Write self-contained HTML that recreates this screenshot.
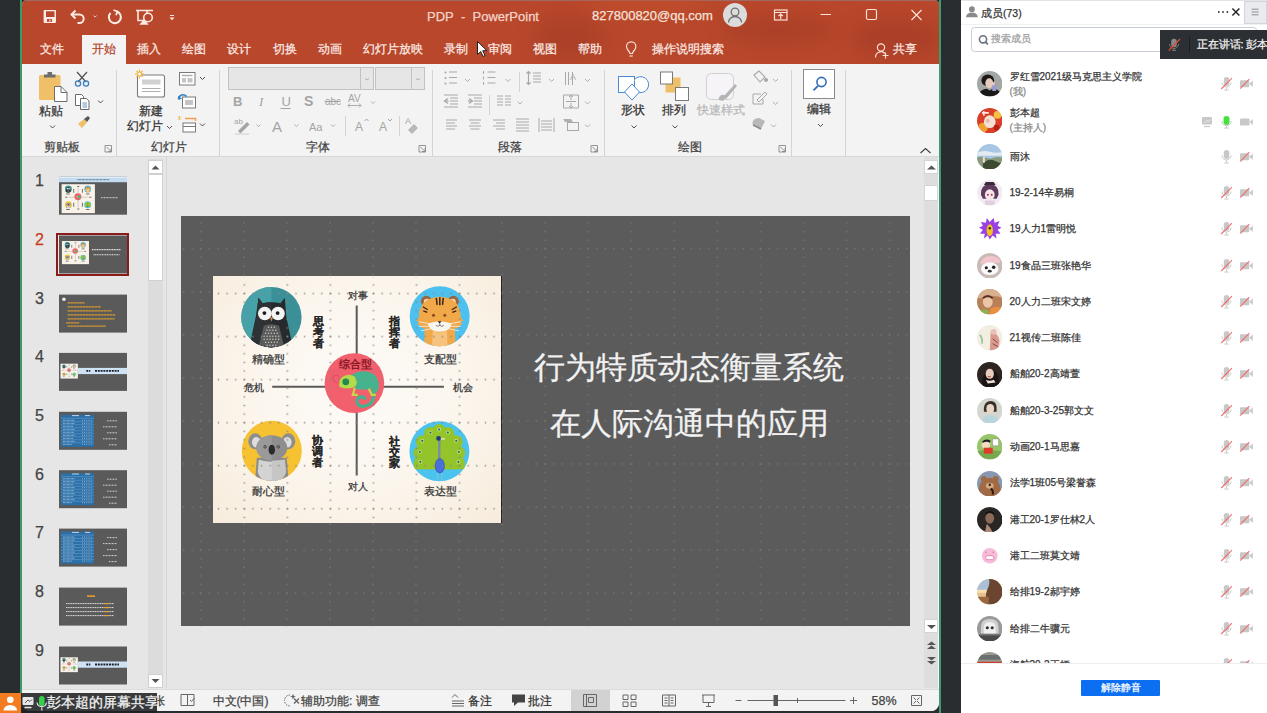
<!DOCTYPE html>
<html><head><meta charset="utf-8">
<style>
*{box-sizing:border-box}
html,body{margin:0;padding:0}
body{width:1267px;height:713px;overflow:hidden;position:relative;background:#2a2d30;font-family:"Liberation Sans",sans-serif;color:#333}
.a{position:absolute}
.t{position:absolute;white-space:nowrap;line-height:1;-webkit-text-stroke:.25px currentColor}
</style></head><body>
<!-- left green line -->
<div class="a" style="left:20px;top:0;width:2px;height:713px;background:#3a9a6a"></div>
<div class="a" style="left:939px;top:0;width:2px;height:713px;background:#3f9a70"></div>
<!-- PPT window -->
<div class="a" id="win" style="left:22px;top:0px;width:917px;height:711px;background:#e6e6e6;border-radius:5px 5px 8px 8px;overflow:hidden">
  <!-- title bar + tabs -->
  <div class="a" style="left:0;top:0;width:917px;height:64px;background:#b8472b"></div>
  <div class="a" style="left:0;top:0;width:917px;height:1.3px;background:#a06a62"></div>
  <!-- decorative patches -->
  <div class="a" style="left:512px;top:16px;width:70px;height:44px;background:#a33c26;border-radius:50%;filter:blur(9px);opacity:.55"></div>
  <div class="a" style="left:700px;top:16px;width:110px;height:28px;background:#a33c26;border-radius:50%;filter:blur(8px);opacity:.55"></div>
  <div class="a" style="left:830px;top:20px;width:90px;height:36px;background:#a23b26;border-radius:50%;filter:blur(9px);opacity:.6"></div>
  <div class="a" style="left:560px;top:-6px;width:130px;height:22px;background:#c4522f;border-radius:50%;filter:blur(8px);opacity:.5"></div>
  <!-- QAT icons -->
  <svg class="a" style="left:0;top:0" width="60" height="30">
    <rect x="21.6" y="10.1" width="12.4" height="12.8" rx=".8" fill="#fbe9e3"/>
    <rect x="24" y="11.3" width="8.5" height="5.7" fill="#b8472b"/>
    <rect x="25" y="19.1" width="5" height="2.8" fill="#b8472b"/>
    <rect x="27.3" y="19.6" width="1.2" height="2" fill="#fbe9e3"/>
  </svg>
  <svg class="a" style="left:0;top:0" width="917" height="64">
    <g fill="none" stroke="#fbe9e3" stroke-width="1.6">
      <!-- save -->

      <!-- undo -->
      <path d="M50 14.5h7.5a4.2 4.2 0 0 1 0 8.4h-2" stroke-width="2"/>
      <path d="M53.5 10.5l-4 4 4 4" stroke-width="2"/>
      <!-- redo circle -->
      <path d="M95 11.5a6 6 0 1 1 -6.5 1.5" stroke-width="2"/>
      <path d="M91.5 10l3.8 1.5 -1.2 3.8" stroke-width="1.8"/>
      <!-- presentation -->
      <path d="M114 10.5h17M116 10.5v10h6M125 10.5v3"/>
      <circle cx="126" cy="17.5" r="4.3"/>
      <path d="M119 24l3-3.5 3 3.5z" fill="#fbe9e3"/>
    </g>
    <path d="M71.5 15.5l1.6 1.6 1.6-1.6" fill="none" stroke="#f2c9bd" stroke-width="1"/>
    <path d="M148 15.5h4" stroke="#fbe9e3" stroke-width="1"/>
    <path d="M147.5 17.5h5l-2.5 2.8z" fill="#fbe9e3"/>
    <!-- avatar -->
    <circle cx="713" cy="15" r="12" fill="#dcdcdc"/>
    <circle cx="713" cy="12" r="3.8" fill="none" stroke="#707070" stroke-width="1.3"/>
    <path d="M706.5 22.5a6.5 6 0 0 1 13 0" fill="none" stroke="#707070" stroke-width="1.3"/>
    <!-- window controls -->
    <g fill="none" stroke="#fbe1d8" stroke-width="1.2">
      <rect x="752.5" y="10" width="12.5" height="10"/>
      <path d="M752.5 12.5h12.5"/>
      <path d="M758.7 19v-5M756.5 16l2.2-2 2.2 2"/>
      <path d="M798.5 14.5h10.5"/>
      <rect x="844.5" y="9.5" width="10" height="10" rx="1.5"/>
      <path d="M889.5 10l10 10M899.5 10l-10 10"/>
      <!-- share person -->
      <circle cx="859" cy="47.5" r="3.6"/>
      <path d="M853.5 57.5a5.5 5.5 0 0 1 9.5-4"/>
      <path d="M863.5 52.5v6M860.5 55.5h6"/>
      <!-- lightbulb -->
      <path d="M608 53.5c0-2 -3.5-3.5-3.5-7a4.7 4.7 0 0 1 9.4 0c0 3.5-3.5 5-3.5 7z"/>
      <path d="M607.5 56h3.2"/>
    </g>
  </svg>
  <div class="t" style="left:405px;top:10px;font-size:13px;color:#f3d5cb">PDP&nbsp; -&nbsp; PowerPoint</div>
  <div class="t" style="left:570px;top:9px;font-size:13px;color:#f6e1da">827800820@qq.com</div>
  <!-- tabs -->
  <div class="a" style="left:60.4px;top:35px;width:43.6px;height:30px;background:#f3f3f3"></div>
  <div class="t" style="left:17.5px;top:42.5px;font-size:12px;color:#fbe9e3">文件</div>
  <div class="t" style="left:70px;top:42.5px;font-size:12px;color:#b8472b">开始</div>
  <div class="t" style="left:114.5px;top:42.5px;font-size:12px;color:#fbe9e3">插入</div>
  <div class="t" style="left:160px;top:42.5px;font-size:12px;color:#fbe9e3">绘图</div>
  <div class="t" style="left:205px;top:42.5px;font-size:12px;color:#fbe9e3">设计</div>
  <div class="t" style="left:250.5px;top:42.5px;font-size:12px;color:#fbe9e3">切换</div>
  <div class="t" style="left:295.5px;top:42.5px;font-size:12px;color:#fbe9e3">动画</div>
  <div class="t" style="left:341px;top:42.5px;font-size:12px;color:#fbe9e3">幻灯片放映</div>
  <div class="t" style="left:421.5px;top:42.5px;font-size:12px;color:#fbe9e3">录制</div>
  <div class="t" style="left:466px;top:42.5px;font-size:12px;color:#fbe9e3">审阅</div>
  <div class="t" style="left:511px;top:42.5px;font-size:12px;color:#fbe9e3">视图</div>
  <div class="t" style="left:556px;top:42.5px;font-size:12px;color:#fbe9e3">帮助</div>
  <div class="t" style="left:630px;top:42.5px;font-size:12px;color:#fbe9e3">操作说明搜索</div>
  <div class="t" style="left:870.5px;top:42.5px;font-size:12px;color:#fbe9e3">共享</div>
  <!-- cursor -->
  <svg class="a" style="left:454px;top:40px" width="14" height="18"><path d="M1.5 1.5v13l3.2-3 2.3 5 2-1-2.3-4.8h4.3z" fill="#fff" stroke="#222" stroke-width="1"/></svg>

  <!-- ribbon -->
  <div class="a" style="left:0;top:64px;width:917px;height:93px;background:#f3f3f3;border-bottom:1px solid #d8d8d8"></div>
  <!-- ribbon content -->
  <svg class="a" style="left:0;top:0" width="917" height="160">
    <!-- separators -->
    <g stroke="#d4d4d4" stroke-width="1">
      <path d="M94.5 70v86M197.5 70v86M410.5 70v86M582.5 70v86M769.5 70v86M823.5 70v86"/>
      <path d="M323.5 116v20M377.5 116v20M497.5 72v20M467.5 95v20"/>
    </g>
    <!-- clipboard -->
    <rect x="17" y="75" width="21.5" height="25" rx="1.5" fill="#f0c069"/>
    <path d="M22 77.5v-3h3.5v-2.5h4.5v2.5h3.5v3z" fill="#6d6d6d"/>
    <path d="M32.5 86.5h6.5l6 6v9h-12.5z" fill="#fff" stroke="#6d6d6d" stroke-width="1"/>
    <path d="M39 86.5v6h6" fill="none" stroke="#6d6d6d" stroke-width="1"/>
    <!-- scissors -->
    <g fill="none" stroke="#505050" stroke-width="1.2"><path d="M55 72l9 10M65 72l-9 10"/></g>
    <circle cx="56" cy="83.5" r="2.6" fill="none" stroke="#3c7fc0" stroke-width="1.3"/>
    <circle cx="64" cy="83.5" r="2.6" fill="none" stroke="#3c7fc0" stroke-width="1.3"/>
    <!-- copy -->
    <path d="M53.5 94.5h6l2 2v9h-8z" fill="#fff" stroke="#6a6a6a" stroke-width="1"/>
    <path d="M58.5 98.5h6l2.5 2.5v8.5h-8.5z" fill="#fff" stroke="#6a6a6a" stroke-width="1"/>
    <path d="M60.5 103h4.5M60.5 105h4.5M60.5 107h4.5" stroke="#3c7fc0" stroke-width=".8"/>
    <!-- format painter -->
    <path d="M56 124l6-5 3 3.5-5 5.5z" fill="#f0c069"/>
    <path d="M62 119l4-3 2 2-3 4z" fill="#555"/>
    <!-- new slide -->
    <rect x="115.5" y="75" width="27" height="22" rx="2" fill="#fff" stroke="#7a7a7a" stroke-width="1.1"/>
    <rect x="120" y="79.5" width="18.5" height="5" fill="#d0d0d0"/>
    <path d="M120 88.5h18.5M120 91.5h18.5" stroke="#9a9a9a" stroke-width=".8"/>
    <g stroke="#f0b040" stroke-width="1.1"><path d="M117.5 69.5v9M113 74h9M114.5 71l6 6M120.5 71l-6 6"/></g>
    <circle cx="117.5" cy="74" r="2" fill="#fff" stroke="#f0b040" stroke-width="1"/>
    <!-- layout -->
    <rect x="157.5" y="72.5" width="15.5" height="12.5" fill="#fff" stroke="#7a7a7a" stroke-width="1"/>
    <path d="M160 75.5h10.5" stroke="#b0b0b0" stroke-width="1.5"/>
    <rect x="160" y="78" width="4" height="4.5" fill="#c4c4c4"/><rect x="165.5" y="78" width="5" height="4.5" fill="#c4c4c4"/>
    <!-- reset -->
    <rect x="160.5" y="97" width="13" height="11" fill="#fff" stroke="#7a7a7a" stroke-width="1"/>
    <rect x="163" y="100" width="8" height="5" fill="#c4c4c4"/>
    <path d="M156.5 99a4.5 4.5 0 0 1 8-2.5" fill="none" stroke="#2f7ec2" stroke-width="1.6"/>
    <path d="M156 96l.5 4 3.5-1.5z" fill="#2f7ec2"/>
    <!-- section -->
    <rect x="161" y="123" width="12.5" height="9" fill="#fff" stroke="#7a7a7a" stroke-width="1"/>
    <path d="M161 126.5h12.5" stroke="#7a7a7a"/>
    <path d="M163 118.5h10.5v2.5" fill="none" stroke="#f0a050" stroke-width="1.5"/>
    <path d="M156 116.5l3 3M159 116.5l-3 3M157.5 116v4" stroke="#f0c069" stroke-width="1"/>
    <!-- chevrons -->
    <g fill="none" stroke="#505050" stroke-width="1">
      <path d="M28 125.5l2.5 2.5 2.5-2.5"/>
      <path d="M76 100.5l2.5 2.5 2.5-2.5"/>
      <path d="M145 126l2.5 2.5 2.5-2.5"/>
      <path d="M178 77l2.5 2.5 2.5-2.5"/>
      <path d="M178 123.5l2.5 2.5 2.5-2.5"/>
      <path d="M609.5 125.5l2.5 2.5 2.5-2.5"/>
      <path d="M650.5 125.5l2.5 2.5 2.5-2.5"/>
      <path d="M796 124l2.5 2.5 2.5-2.5"/>
      <path d="M898.5 153l5-4.5 5 4.5" stroke="#444" stroke-width="1.2"/>
    </g>
    <!-- launchers -->
    <g fill="none" stroke="#8a8a8a" stroke-width=".9">
      <path d="M83 145.5h6.5v6.5h-6.5z M84.5 147l4 4M89 148.5v3h-3"/>
      <path d="M397 145.5h6.5v6.5h-6.5z M398.5 147l4 4M403 148.5v3h-3"/>
      <path d="M569 145.5h6.5v6.5h-6.5z M570.5 147l4 4M575 148.5v3h-3"/>
      <path d="M757 145.5h6.5v6.5h-6.5z M758.5 147l4 4M763 148.5v3h-3"/>
    </g>
    <!-- font boxes -->
    <rect x="206.5" y="67.5" width="145" height="22" fill="#e6e6e6" stroke="#c2c2c2"/>
    <path d="M338.5 67.5v22" stroke="#c2c2c2"/>
    <rect x="353.5" y="67.5" width="49" height="22" fill="#e6e6e6" stroke="#c2c2c2"/>
    <path d="M389.5 67.5v22" stroke="#c2c2c2"/>
    <g fill="none" stroke="#a8a8a8" stroke-width=".9">
      <path d="M343 78.5l2 1.5 2-1.5M394 78.5l2 1.5 2-1.5"/>
      <path d="M349 101.5l2 2 2-2M234.5 124.5l2 2 2-2M272.5 124.5l2 2 2-2M309 124.5l2 2 2-2"/>
      <path d="M443 79l2.5 2.5 2.5-2.5M483.5 79l2.5 2.5 2.5-2.5M527 79l2.5 2.5 2.5-2.5M563 79l2.5 2.5 2.5-2.5"/>
      <path d="M495.5 101.5l2.5 2.5 2.5-2.5M563 101.5l2.5 2.5 2.5-2.5M563 124.5l2.5 2.5 2.5-2.5"/>
      <path d="M751 79l2.5 2.5 2.5-2.5M751 102l2.5 2.5 2.5-2.5M749 124.5l2.5 2.5 2.5-2.5"/>
    </g>
    <!-- B I U S abc AV -->
    <g fill="#a4a4a4" font-family="Liberation Sans" font-weight="bold">
      <text x="211" y="106" font-size="13">B</text>
      <text x="237" y="106" font-size="13" font-style="italic" font-weight="normal" font-family="Liberation Serif">I</text>
      <text x="259.5" y="106" font-size="13" font-weight="normal">U</text>
      <text x="282" y="106" font-size="14">S</text>
      <text x="303" y="105" font-size="10" font-weight="normal">abc</text>
      <text x="326" y="102" font-size="10" font-weight="normal">AV</text>
      <text x="250" y="132" font-size="15" font-weight="normal">A</text>
      <text x="287" y="131" font-size="11" font-weight="normal">Aa</text>
      <text x="333" y="131" font-size="12" font-weight="normal">A</text>
      <text x="357" y="131" font-size="12" font-weight="normal">A</text>
    </g>
    <path d="M258.5 108.5h10" stroke="#a4a4a4" stroke-width="1"/>
    <path d="M302.5 101.5h16" stroke="#a4a4a4" stroke-width="1"/>
    <path d="M326 105.5h13M328 103.5l-2 2 2 2M337 103.5l2 2-2 2" stroke="#a4a4a4" stroke-width=".9" fill="none"/>
    <path d="M342.5 121l2-2 2 2M366 119l2 2 2-2" stroke="#a4a4a4" stroke-width="1" fill="none"/>
    <!-- pen highlighter -->
    <text x="212" y="124" font-size="8" fill="#a4a4a4" font-family="Liberation Sans">ab</text>
    <path d="M216 131l9-9 2.5 2.5-9 9z" fill="#a4a4a4"/>
    <path d="M213 134h14" stroke="#e0e0e0" stroke-width="2"/>
    <!-- eraser -->
    <text x="383" y="124" font-size="9" fill="#a4a4a4" font-family="Liberation Sans">A</text>
    <path d="M386 130l6-6 4 4-6 6z" fill="#b8b8b8"/>
    <!-- paragraph icons -->
    <g fill="#a8a8a8">
      <circle cx="423.5" cy="72.5" r="1"/><circle cx="423.5" cy="78" r="1"/><circle cx="423.5" cy="83.5" r="1"/>
      <path d="M427 72h8M427 77.5h8M427 83h8" stroke="#a8a8a8" stroke-width="1.2"/>
      <path d="M465.5 72h8M465.5 77.5h8M465.5 83h8" stroke="#a8a8a8" stroke-width="1.2"/>
      <path d="M461.5 71v3M461.5 76.5v3M461.5 82v3" stroke="#a8a8a8" stroke-width="1"/>
      <path d="M511 73h8M511 76h8M511 79h8M511 82h8" stroke="#a8a8a8" stroke-width="1"/>
      <path d="M506.5 71.5v13M504.5 73.5l2-2 2 2M504.5 82.5l2 2 2-2" stroke="#a8a8a8" stroke-width="1.2" fill="none"/>
      <path d="M543.5 72v13M546.5 72v13M550.5 72v13" stroke="#a8a8a8" stroke-width="1"/>
      <text x="548" y="80" font-size="9" font-family="Liberation Sans">A</text>
      <!-- row 2 -->
      <path d="M422 95h14M428 98h8M428 101h8M428 104h8M422 107h14" stroke="#a8a8a8" stroke-width="1"/>
      <path d="M426 98.5l-3.5 2.5 3.5 2.5" stroke="#a8a8a8" stroke-width="1.3" fill="none"/><path d="M422.5 101h4" stroke="#a8a8a8" stroke-width="1.3"/>
      <path d="M446 95h14M452 98h8M452 101h8M452 104h8M446 107h14" stroke="#a8a8a8" stroke-width="1"/>
      <path d="M447 98.5l3.5 2.5-3.5 2.5" stroke="#a8a8a8" stroke-width="1.3" fill="none"/><path d="M446 101h4" stroke="#a8a8a8" stroke-width="1.3"/>
      <path d="M475 96h6M483 96h6M475 99h6M483 99h6M475 102h6M483 102h6M475 105h6M483 105h6" stroke="#a8a8a8" stroke-width="1"/>
      <path d="M541.5 95h15v13h-15z" fill="none" stroke="#a8a8a8" stroke-width="1"/>
      <path d="M549 95v5M547 97l2-2 2 2M549 108v-5M547 106l2 2 2-2M544 101.5h10" stroke="#a8a8a8" stroke-width="1" fill="none"/>
      <!-- row 3 align -->
      <path d="M424 120h11M424 123h9M424 126h11M424 129h9" stroke="#a8a8a8" stroke-width="1"/>
      <path d="M447 120h12M448.5 123h9M447 126h12M448.5 129h9" stroke="#a8a8a8" stroke-width="1"/>
      <path d="M471 120h12M474 123h9M471 126h12M474 129h9" stroke="#a8a8a8" stroke-width="1"/>
      <path d="M494 119h13M494 122h13M494 125h13M494 128h13M494 131h13" stroke="#a8a8a8" stroke-width="1"/>
      <path d="M517 118v14M532 118v14M519 121h11M519 124h11M519 127h11M519 130h11" stroke="#a8a8a8" stroke-width="1"/>
      <path d="M541 119h8l2 3h-8zM541 125h5" fill="#b0b0b0"/>
      <rect x="545.5" y="122.5" width="11" height="8" fill="#f3f3f3" stroke="#a8a8a8" stroke-width="1"/>
    </g>
    <!-- shapes -->
    <rect x="596.5" y="76.5" width="16" height="16" fill="#fff" stroke="#4a8ad0" stroke-width="1"/>
    <path d="M612.5 79.5a8 8 0 1 1 2 12" fill="#fff" stroke="#4a8ad0" stroke-width="1"/>
    <path d="M610 84l7.5 8-7.5 8-7.5-8z" fill="#fff" stroke="#4a8ad0" stroke-width="1"/>
    <!-- arrange -->
    <rect x="643.5" y="77.5" width="15" height="15" fill="#f0c069"/>
    <rect x="638.5" y="72" width="12" height="12" fill="#fff" stroke="#7a7a7a" stroke-width="1"/>
    <rect x="653.5" y="87.5" width="13" height="13" fill="#fff" stroke="#7a7a7a" stroke-width="1"/>
    <!-- quick styles -->
    <rect x="684.5" y="73.5" width="27" height="26" rx="5" fill="#f6f4f8" stroke="#d0d0d0" stroke-width="1"/>
    <path d="M701 97l12-13 2 2-11 13z" fill="#b4b4b4"/>
    <path d="M697 100a4 4 0 0 1 5-5l2 2-3 4z" fill="#b4b4b4"/>
    <!-- fill/outline/effects -->
    <path d="M732 75l5-4 6 6-5 5z" fill="none" stroke="#a8a8a8" stroke-width="1.1"/>
    <path d="M744 78a2 2 0 1 0 0.1 0" fill="#a8a8a8"/>
    <path d="M731 94h8M731 94v10h10v-5" fill="none" stroke="#a8a8a8" stroke-width="1"/>
    <path d="M735 100l8-8 2 2-8 8z" fill="none" stroke="#a8a8a8" stroke-width="1"/>
    <path d="M731 125a6 5 0 0 1 6-7l6 3-4 8z" fill="#b8b8b8"/>
    <path d="M731 125l8 4" stroke="#8a8a8a" stroke-width="1.5"/>
    <!-- edit -->
    <rect x="781.5" y="69.5" width="31" height="29" fill="#fff" stroke="#8a8a8a" stroke-width="1"/>
    <circle cx="799.5" cy="82" r="4.6" fill="none" stroke="#2f6fba" stroke-width="1.6"/>
    <path d="M796 85.8l-4.5 4.5" stroke="#2f6fba" stroke-width="1.8"/>
  </svg>
  <div class="t" style="left:16.5px;top:105px;font-size:12px;color:#333">粘贴</div>
  <div class="t" style="left:116.5px;top:105px;font-size:12px;color:#333">新建</div>
  <div class="t" style="left:105px;top:120px;font-size:12px;color:#333">幻灯片</div>
  <div class="t" style="left:598.5px;top:104px;font-size:12px;color:#333">形状</div>
  <div class="t" style="left:639.5px;top:104px;font-size:12px;color:#333">排列</div>
  <div class="t" style="left:674.5px;top:104px;font-size:12px;color:#b8b8b8">快速样式</div>
  <div class="t" style="left:785px;top:103px;font-size:12px;color:#333">编辑</div>
  <div class="t" style="left:22px;top:141px;font-size:12px;color:#444">剪贴板</div>
  <div class="t" style="left:128.5px;top:141px;font-size:12px;color:#444">幻灯片</div>
  <div class="t" style="left:284px;top:141px;font-size:12px;color:#444">字体</div>
  <div class="t" style="left:476px;top:141px;font-size:12px;color:#444">段落</div>
  <div class="t" style="left:655.5px;top:141px;font-size:12px;color:#444">绘图</div>


  <!-- slide panel -->
  <div class="a" style="left:0;top:157px;width:144px;height:531px;background:#e6e6e6"></div>
  <div class="a" style="left:144px;top:157px;width:1px;height:531px;background:#d6d6d6"></div>
  <!-- panel scrollbar -->
  <div class="a" style="left:125.5px;top:159px;width:15px;height:529px;background:#dcdcdc"></div>
  <div class="a" style="left:125.5px;top:159.5px;width:15px;height:14.5px;background:#fff;border:1px solid #d0d0d0"></div>
  <div class="a" style="left:125.5px;top:174px;width:15px;height:107px;background:#fff;border:1px solid #d0d0d0"></div>
  <div class="a" style="left:125.5px;top:673.5px;width:15px;height:14.5px;background:#fff;border:1px solid #d0d0d0"></div>
  <svg class="a" style="left:125.5px;top:159.5px" width="15" height="529">
    <path d="M3.5 9.5l4-4 4 4z" fill="#555"/>
    <path d="M3.5 519l4 4 4-4z" fill="#555"/>
  </svg>
  <!-- numbers -->
  <div class="t" style="left:13px;top:173px;font-size:16px;color:#444">1</div>
  <div class="t" style="left:13px;top:232px;font-size:16px;color:#c43e1c">2</div>
  <div class="t" style="left:13px;top:290.5px;font-size:16px;color:#444">3</div>
  <div class="t" style="left:13px;top:349px;font-size:16px;color:#444">4</div>
  <div class="t" style="left:13px;top:408px;font-size:16px;color:#444">5</div>
  <div class="t" style="left:13px;top:466.5px;font-size:16px;color:#444">6</div>
  <div class="t" style="left:13px;top:525px;font-size:16px;color:#444">7</div>
  <div class="t" style="left:13px;top:584px;font-size:16px;color:#444">8</div>
  <div class="t" style="left:13px;top:642.5px;font-size:16px;color:#444">9</div>
  <!-- selected border -->
  <div class="a" style="left:34.3px;top:233px;width:73px;height:43px;border:2px solid #8a1c1c"></div>
  <div class="a" style="left:36.3px;top:235px;width:69px;height:39px;border:1px solid #f5e6e6"></div>
  <!-- thumbnails -->
  <svg class="a" style="left:37px;top:0" width="68" height="700">
    <defs>
      <g id="mcard">
        <rect x="212.8" y="275.6" width="289.7" height="247.7" fill="#f8f2e8"/>
        <use href="#cardart"/>
        <path d="M252 359h32M424 359h32M252 491h32M424 491h32M348 295h19M348 487h19M243 387h20M452 387h20M318 316v32M394 316v32M318 434v34M394 435v33" stroke="#777" stroke-width="9"/>
      </g>
      <g id="tbl">
        <rect x="2" y="3" width="33" height="32" fill="#2b6fa8"/>
        <path d="M2 6.5h33M2 10h33M2 13h33M2 16h33M2 19h33M2 22h33M2 25h33M2 28h33M2 31h33" stroke="#8ab8dc" stroke-width=".4"/>
        <path d="M13 3.8h7" stroke="#e8f0f8" stroke-width=".8"/><path d="M26 3.8h5" stroke="#e8f0f8" stroke-width=".8"/>
        <path d="M4 8.5h12M4 11.5h12M4 14.5h10M4 17.5h12M4 20.5h11M4 23.5h12M4 26.5h10M4 29.5h12M4 32.5h9" stroke="#d8e6f2" stroke-width=".7" stroke-dasharray=".8 .5"/>
        <path d="M23 8.5h10M23 11.5h10M23 14.5h10M23 17.5h10M23 20.5h10M23 23.5h10M23 26.5h10M23 29.5h10M23 32.5h10" stroke="#d8e6f2" stroke-width=".7" stroke-dasharray=".8 1.4"/>
        <path d="M48 9h10M44 15h14M48 21h10M44 27h14M50 33h8" stroke="#e0e0e0" stroke-width=".9" stroke-dasharray="1 .5"/>
      </g>
    </defs>
    <!-- 1 -->
    <g transform="translate(0 176.7)">
      <rect width="68" height="38" fill="#5a5a5a"/>
      <rect width="68" height="5.5" fill="#c4dcf2"/>
      <rect y="0" width="68" height="1.2" fill="#e4eef8"/>
      <path d="M18.5 3h32" stroke="#4a5a6a" stroke-width=".9" stroke-dasharray=".9 .5"/>
      <g transform="translate(2.6 7.5) scale(.115 .117) translate(-212.8 -275.6)"><use href="#mcard"/></g>
      <path d="M42 21h17" stroke="#d8d8d8" stroke-width="1" stroke-dasharray="1 .5"/>
    </g>
    <!-- 2 -->
    <g transform="translate(0 235.5)">
      <rect width="68" height="38" fill="#5a5a5a"/>
      <g transform="scale(.0933) translate(-181.2 -216.2)"><use href="#mcard"/>
        <path d="M534 367h311M550 423h279" stroke="#e6e6e6" stroke-width="12" stroke-dasharray="12 6"/></g>
    </g>
    <!-- 3 -->
    <g transform="translate(0 294.6)">
      <rect width="68" height="38" fill="#5a5a5a"/>
      <circle cx="4.9" cy="4.6" r="1.8" fill="#eee"/>
      <path d="M8.7 8.3h17M8.7 12.3h33.3M8.7 16.3h44M8.7 20.3h48M8.7 24.3h47M7.2 28.3h13M8.7 31.5h38" stroke="#f0a828" stroke-width="1.1" stroke-dasharray="1.1 .4"/>
    </g>
    <!-- 4 -->
    <g transform="translate(0 352.9)">
      <rect width="68" height="38" fill="#5a5a5a"/>
      <g transform="translate(1.5 10.8) scale(.06) translate(-212.8 -275.6)"><use href="#mcard"/></g>
      <rect x="18.8" y="15" width="49.2" height="6.2" fill="#cfe2f4"/>
      <path d="M27.3 18h4M36 18h24" stroke="#1a2230" stroke-width="1.8" stroke-dasharray="2 .8"/>
    </g>
    <!-- 5,6,7 -->
    <g transform="translate(0 411.8)"><rect width="68" height="38" fill="#5a5a5a"/><use href="#tbl"/></g>
    <g transform="translate(0 470.2)"><rect width="68" height="38" fill="#5a5a5a"/><use href="#tbl"/></g>
    <g transform="translate(0 528.6)"><rect width="68" height="38" fill="#5a5a5a"/><use href="#tbl"/></g>
    <!-- 8 -->
    <g transform="translate(0 587.6)">
      <rect width="68" height="38" fill="#5a5a5a"/>
      <path d="M28 8.5h8" stroke="#f0a030" stroke-width="1.5"/>
      <path d="M7 16h48M7 20h48M7 24h48M7 28h48" stroke="#e0e0e0" stroke-width="1" stroke-dasharray="1.2 .5"/>
      <path d="M45 16h5M45 20h5M45 24h5M45 28h5" stroke="#f0a030" stroke-width="1"/>
    </g>
    <!-- 9 -->
    <g transform="translate(0 646.5)">
      <rect width="68" height="38" fill="#5a5a5a"/>
      <g transform="translate(1.5 10.8) scale(.06) translate(-212.8 -275.6)"><use href="#mcard"/></g>
      <rect x="18.8" y="15" width="49.2" height="6.2" fill="#cfe2f4"/>
      <path d="M27.3 18h4M36 18h24" stroke="#1a2230" stroke-width="1.8" stroke-dasharray="2 .8"/>
    </g>
  </svg>
  <!-- main area -->
  <div class="a" style="left:145px;top:157px;width:756px;height:531px;background:#e6e6e6"></div>
  <div class="a" style="left:901.5px;top:157px;width:15px;height:531px;background:#dedede"></div>
  <div class="a" style="left:901.5px;top:160px;width:14px;height:14px;background:#fff;border:1px solid #d4d4d4"></div>
  <div class="a" style="left:901.5px;top:185px;width:14px;height:15.5px;background:#fff;border:1px solid #d4d4d4"></div>
  <div class="a" style="left:901.5px;top:618.5px;width:14px;height:14.5px;background:#fff;border:1px solid #d4d4d4"></div>
  <div class="a" style="left:916px;top:157px;width:1px;height:531px;background:#f4f4f4"></div>
  <svg class="a" style="left:901.5px;top:157px" width="15" height="531">
    <path d="M3 12.5l4.5-4 4.5 4z" fill="#555"/>
    <path d="M3 468l4.5 4 4.5-4z" fill="#555"/>
    <path d="M3 488l4.5-3.5 4.5 3.5zM3 492l4.5-3.5 4.5 3.5z" fill="#555"/>
    <path d="M3 500l4.5 3.5 4.5-3.5zM3 504l4.5 3.5 4.5-3.5z" fill="#555"/>
  </svg>

  <!-- slide -->
  <div class="a" style="left:159.2px;top:216.2px;width:728.6px;height:410.2px;background:#5b5b5b"></div>
  <svg class="a" style="left:159.2px;top:216.2px" width="729" height="411" viewBox="181.2 216.2 729 411">
    <defs>
      <pattern id="gv" patternUnits="userSpaceOnUse" x="179.575" y="218.965" width="43.05" height="8.61"><rect x="20.8" y="3.6" width="1.2" height="1.2" fill="#7c7c7c"/></pattern>
      <pattern id="gh" patternUnits="userSpaceOnUse" x="179.575" y="227.575" width="8.61" height="43.05"><rect x="3.6" y="20.8" width="1.2" height="1.2" fill="#7c7c7c"/></pattern>
      <pattern id="gv2" patternUnits="userSpaceOnUse" x="179.575" y="218.965" width="43.05" height="8.61"><rect x="20.8" y="3.6" width="1.4" height="1.4" fill="#8a8580"/></pattern>
      <pattern id="gh2" patternUnits="userSpaceOnUse" x="179.575" y="227.575" width="8.61" height="43.05"><rect x="3.6" y="20.8" width="1.4" height="1.4" fill="#8a8580"/></pattern>
    </defs>
    <rect x="181.2" y="216.2" width="729" height="411" fill="url(#gv)"/>
    <rect x="181.2" y="216.2" width="729" height="411" fill="url(#gh)"/>
  </svg>

  <!-- card -->
  <div class="a" style="left:190.8px;top:275.6px;width:289.7px;height:247.7px;background:radial-gradient(ellipse at 50% 45%,#fdfbf8 0%,#fbf5ec 55%,#f7ecdc 100%);border-right:1px solid #222"></div>
  <svg class="a" style="left:159.2px;top:216.2px" width="729" height="411" viewBox="181.2 216.2 729 411">
    <g id="cardart">
    <!-- axes -->
    <path d="M356.9 305.7v169.9M272.4 387h171.7" stroke="#5a5a5a" stroke-width="2"/>
    <!-- owl -->
    <clipPath id="c1"><circle cx="271.6" cy="317.4" r="30.2"/></clipPath>
    <g clip-path="url(#c1)">
      <rect x="240" y="286" width="64" height="64" fill="#3a9096"/>
      <rect x="240" y="286" width="31.6" height="64" fill="#46a2a8"/>
      <path d="M258.7 297.9l4 5.5q9-2 18 0l4.3-5.5 1.5 19 7 33h-44.5l7-33z" fill="#262a2c"/>
      <path d="M258.7 297.9l4 5.5q4.5-1 8.9-1v47.6h-21.9l7-33z" fill="#2e3234"/>
      <path d="M264 326q7.6-3 15.2 0l6 24h-27.2z" fill="#5a5a5a"/>
      <g fill="#c8c8c8"><circle cx="268.70" cy="327.5" r=".75"/><circle cx="271.60" cy="327.5" r=".75"/><circle cx="274.50" cy="327.5" r=".75"/><circle cx="267.25" cy="330.5" r=".75"/><circle cx="270.15" cy="330.5" r=".75"/><circle cx="273.05" cy="330.5" r=".75"/><circle cx="275.95" cy="330.5" r=".75"/><circle cx="265.80" cy="333.5" r=".75"/><circle cx="268.70" cy="333.5" r=".75"/><circle cx="271.60" cy="333.5" r=".75"/><circle cx="274.50" cy="333.5" r=".75"/><circle cx="277.40" cy="333.5" r=".75"/><circle cx="264.35" cy="336.5" r=".75"/><circle cx="267.25" cy="336.5" r=".75"/><circle cx="270.15" cy="336.5" r=".75"/><circle cx="273.05" cy="336.5" r=".75"/><circle cx="275.95" cy="336.5" r=".75"/><circle cx="278.85" cy="336.5" r=".75"/><circle cx="264.35" cy="339.5" r=".75"/><circle cx="267.25" cy="339.5" r=".75"/><circle cx="270.15" cy="339.5" r=".75"/><circle cx="273.05" cy="339.5" r=".75"/><circle cx="275.95" cy="339.5" r=".75"/><circle cx="278.85" cy="339.5" r=".75"/><circle cx="265.80" cy="342.5" r=".75"/><circle cx="268.70" cy="342.5" r=".75"/><circle cx="271.60" cy="342.5" r=".75"/><circle cx="274.50" cy="342.5" r=".75"/><circle cx="277.40" cy="342.5" r=".75"/><circle cx="267.25" cy="345.5" r=".75"/><circle cx="270.15" cy="345.5" r=".75"/><circle cx="273.05" cy="345.5" r=".75"/><circle cx="275.95" cy="345.5" r=".75"/></g>
      <circle cx="265" cy="313.7" r="6.8" fill="#f4f4f4"/><circle cx="278.2" cy="313.7" r="6.8" fill="#f4f4f4"/>
      <circle cx="264.6" cy="313.3" r="1.9" fill="#1a1a1a"/><circle cx="277.8" cy="313.3" r="1.9" fill="#1a1a1a"/>
      <path d="M270.2 317.5h3l-1.5 4.5z" fill="#d88848"/>
    </g>
    <!-- tiger -->
    <clipPath id="c2"><circle cx="439.9" cy="316.5" r="30"/></clipPath>
    <g clip-path="url(#c2)">
      <rect x="408" y="285" width="64" height="64" fill="#4cc0ee"/>
      <path d="M424 350l1-22h30l1 22z" fill="#f0a848"/>
      <path d="M432 350l1-20h14l1 20z" fill="#f6c27e"/>
      <circle cx="426.5" cy="301.5" r="5.5" fill="#9a6640"/><circle cx="453.5" cy="301.5" r="5.5" fill="#9a6640"/>
      <circle cx="427" cy="302" r="3" fill="#f6d2ac"/><circle cx="453" cy="302" r="3" fill="#f6d2ac"/>
      <path d="M419 318q0-20 21-21q21 1 21 21q2 6-3 10l-18 5-18-5q-5-4-3-10z" fill="#f0a848"/>
      <path d="M419 318l-3 3 4 1-3 3 4 0M461 318l3 3-4 1 3 3-4 0" fill="#f0a848"/>
      <path d="M436.5 298l.8 7M440 297.5v8M443.5 298l-.8 7" stroke="#3a2418" stroke-width="1.5"/>
      <path d="M423 307l5 3M423.5 311l4 1.5M457 307l-5 3M456.5 311l-4 1.5" stroke="#3a2418" stroke-width="1.3"/>
      <circle cx="433.7" cy="315.5" r="1.5" fill="#8a4a20"/><circle cx="445" cy="315.5" r="1.5" fill="#8a4a20"/>
      <path d="M428 324q12-5 24 0q-2 8-12 8q-10 0-12-8z" fill="#f8f6ee"/>
      <path d="M437.8 321.5h4l-2 2.2z" fill="#222"/>
      <path d="M440 323.5v2q-2 2-4 0M440 325.5q2 2 4 0" stroke="#333" stroke-width=".6" fill="none"/>
      <path d="M436 325l-17-3M436 326.5l-17 0M436 328l-15 3M444 325l17-3M444 326.5l17 0M444 328l15 3" stroke="#f4f4f0" stroke-width=".8"/>
    </g>
    <!-- koala -->
    <clipPath id="c3"><circle cx="272" cy="451" r="30"/></clipPath>
    <g clip-path="url(#c3)">
      <rect x="240" y="419" width="64" height="64" fill="#f6c232"/>
      <path d="M255 486l2-28h30l2 28z" fill="#8c8c8c"/>
      <ellipse cx="255.5" cy="441.5" rx="7" ry="8" fill="#8e8e8e"/><ellipse cx="288.5" cy="441.5" rx="7" ry="8" fill="#8e8e8e"/>
      <ellipse cx="256.5" cy="442.5" rx="4.3" ry="5.3" fill="#dedede"/><ellipse cx="287.5" cy="442.5" rx="4.3" ry="5.3" fill="#dedede"/>
      <ellipse cx="272" cy="448" rx="15.5" ry="12.5" fill="#8e8e8e"/>
      <path d="M272 435.5a15.5 12.5 0 0 0 0 25z" fill="#9a9a9a"/>
      <path d="M259 460q13 4 26 0l1 12q-1 8-14 12q-13-4-14-12z" fill="#d4d4d4"/>
      <path d="M272 461v23q13-4 14-12l-1-12z" fill="#c6c6c6"/>
      <circle cx="265.3" cy="447" r="1.3" fill="none" stroke="#333" stroke-width=".8"/><circle cx="278.5" cy="447" r="1.3" fill="none" stroke="#333" stroke-width=".8"/>
      <ellipse cx="272" cy="450" rx="3.2" ry="5" fill="#2a2a2a"/>
    </g>
    <!-- peacock -->
    <clipPath id="c4"><circle cx="439.6" cy="451.4" r="30"/></clipPath>
    <g clip-path="url(#c4)">
      <rect x="408" y="420" width="64" height="64" fill="#4cc2ee"/>
      <g fill="#93c42a"><circle cx="439.3" cy="430.7" r="6.5"/><circle cx="430.6" cy="433.8" r="6.5"/><circle cx="448" cy="433.8" r="6.5"/><circle cx="422.5" cy="442" r="6.5"/><circle cx="456.5" cy="442" r="6.5"/><circle cx="420" cy="453" r="6.5"/><circle cx="459" cy="453" r="6.5"/><circle cx="420.5" cy="463" r="6.5"/><circle cx="458.5" cy="463" r="6.5"/><path d="M425 433h29v36.5h-29z"/><path d="M414 462h51v7.5h-51z"/></g>
      <circle cx="439.3" cy="429.7" r="2" fill="#c8e070"/><circle cx="439.3" cy="429.7" r="1.1" fill="#1e6a6a"/><circle cx="430.6" cy="432.8" r="2" fill="#c8e070"/><circle cx="430.6" cy="432.8" r="1.1" fill="#1e6a6a"/><circle cx="448" cy="432.8" r="2" fill="#c8e070"/><circle cx="448" cy="432.8" r="1.1" fill="#1e6a6a"/><circle cx="422.5" cy="441" r="2" fill="#c8e070"/><circle cx="422.5" cy="441" r="1.1" fill="#1e6a6a"/><circle cx="456.5" cy="441" r="2" fill="#c8e070"/><circle cx="456.5" cy="441" r="1.1" fill="#1e6a6a"/><circle cx="420" cy="452" r="2" fill="#c8e070"/><circle cx="420" cy="452" r="1.1" fill="#1e6a6a"/><circle cx="459" cy="452" r="2" fill="#c8e070"/><circle cx="459" cy="452" r="1.1" fill="#1e6a6a"/><circle cx="420.5" cy="462" r="2" fill="#c8e070"/><circle cx="420.5" cy="462" r="1.1" fill="#1e6a6a"/><circle cx="458.5" cy="462" r="2" fill="#c8e070"/><circle cx="458.5" cy="462" r="1.1" fill="#1e6a6a"/>
      <path d="M439.5 440v20" stroke="#7a88b0" stroke-width="2.2"/>
      <circle cx="438.8" cy="438.6" r="2.4" fill="#1e3a80"/>
      <path d="M441 439h4" stroke="#f8f4d0" stroke-width="1.2"/>
      <ellipse cx="440" cy="466" rx="4.6" ry="7.2" fill="#4a6ee0" stroke="#2a4aa0" stroke-width=".6"/>
      <path d="M438 473v10M442 473v10" stroke="#8ac8d8" stroke-width=".8"/>
    </g>
    <!-- chameleon -->
    <circle cx="354.6" cy="383.3" r="29.8" fill="#f2606e"/>
    <path d="M373 391q3 12-7 15q-8 2-9-4q0-5 5-5q3 0 3 3" fill="none" stroke="#45b48e" stroke-width="3.2"/>
    <path d="M350 377q8-7 18-5q10 2 11 12q1 8-5 10l-3-5q-8 2-15 0z" fill="#45b48e"/>
    <path d="M339.5 383q1-7 9-8q7 0 8.5 6q.5 5-4 7q-8 2-13.5-1z" fill="#b4dc4a"/>
    <circle cx="346" cy="382" r="3.4" fill="#1e8a4e"/>
    <path d="M355 388l-2 7h5M369 389l3 6h4" fill="none" stroke="#c4d84a" stroke-width="2.2"/>
    <path d="M338 383q-4 0-5-4q0-4 4-4q3 1 2 3" fill="none" stroke="#d84a62" stroke-width="1"/>
    <path d="M332 380q-2-7 4-9q5-1 6 3" fill="none" stroke="#e45a70" stroke-width=".9"/>
    <g fill="#666" opacity=".0" class="lbl"></g>
    </g>
  </svg>
  <!-- slide labels -->
  <div class="t" style="left:316.5px;top:358.5px;font-size:10.8px;font-weight:bold;color:#8c1a28;-webkit-text-stroke:0">综合型</div>
  <div class="t" style="left:325.5px;top:291.0px;font-size:10px;color:#333">对事</div>
  <div class="t" style="left:325.5px;top:482.0px;font-size:10px;color:#333">对人</div>
  <div class="t" style="left:221.5px;top:383.0px;font-size:10px;color:#333">危机</div>
  <div class="t" style="left:430.5px;top:383.0px;font-size:10px;color:#333">机会</div>
  <div class="t" style="left:229.5px;top:353.5px;font-size:11px;color:#333">精确型</div>
  <div class="t" style="left:401.5px;top:354.0px;font-size:11px;color:#333">支配型</div>
  <div class="t" style="left:229.5px;top:485.5px;font-size:11px;color:#333">耐心型</div>
  <div class="t" style="left:401.5px;top:486.0px;font-size:11px;color:#333">表达型</div>
  <div class="t" style="left:290.5px;top:316.0px;font-size:11px;font-weight:bold;color:#262626;width:12px;white-space:normal;line-height:11px;-webkit-text-stroke:.15px currentColor">思考者</div>
  <div class="t" style="left:367px;top:316.0px;font-size:11px;font-weight:bold;color:#262626;width:12px;white-space:normal;line-height:11px;-webkit-text-stroke:.15px currentColor">指挥者</div>
  <div class="t" style="left:290px;top:435.0px;font-size:11px;font-weight:bold;color:#262626;width:12px;white-space:normal;line-height:11px;-webkit-text-stroke:.15px currentColor">协调者</div>
  <div class="t" style="left:367px;top:436.0px;font-size:11px;font-weight:bold;color:#262626;width:12px;white-space:normal;line-height:11px;-webkit-text-stroke:.15px currentColor">社交家</div>

  <svg class="a" style="left:190.8px;top:276.6px" width="290" height="248" viewBox="212.8 275.6 290 248">
    <rect x="212.8" y="275.6" width="289" height="248" fill="url(#gv2)"/>
    <rect x="212.8" y="275.6" width="289" height="248" fill="url(#gh2)"/>
  </svg>
  <!-- title -->
  <div class="t" style="left:511.5px;top:351.5px;font-size:31.3px;color:#f2f2f2">行为特质动态衡量系统</div>
  <div class="t" style="left:527.5px;top:407.5px;font-size:31.3px;color:#f2f2f2">在人际沟通中的应用</div>

  <!-- status bar -->
  <div class="a" style="left:0;top:689px;width:917px;height:22px;background:#f3f3f3;border-top:1px solid #dcdcdc"></div>
  <!-- status bar content -->
  <div class="t" style="left:190.5px;top:694.5px;font-size:12px;color:#444">中文(中国)</div>
  <div class="t" style="left:279px;top:694.5px;font-size:12px;color:#444">辅助功能: 调查</div>
  <div class="t" style="left:446px;top:694.5px;font-size:12px;color:#333">备注</div>
  <div class="t" style="left:506px;top:694.5px;font-size:12px;color:#333">批注</div>
  <div class="t" style="left:849.5px;top:694.5px;font-size:12.5px;color:#444">58%</div>
  <div class="t" style="left:130.5px;top:694.5px;font-size:12px;color:#444">张</div>
  <div class="a" style="left:549.3px;top:690px;width:39px;height:21px;background:#d2d2d2"></div>
  <svg class="a" style="left:0;top:688px" width="917" height="24">
    <g fill="none" stroke="#666" stroke-width="1">
      <!-- book -->
      <path d="M159 6.5h6.5v11h-6.5zM165.5 6.5h6.5v11h-6.5z"/>
      <path d="M168 12l1.5 1.5 3-3.5" />
      <!-- accessibility -->
      <path d="M268 7a5.5 5.5 0 0 0 0 11" stroke-dasharray="1.5 1"/>
      <path d="M272 10.5l5 5M277 10.5l-5 5" stroke-width="1.4"/>
      <path d="M271 6l1 2 2 .5-2 .8-1 2-1-2-2-.8 2-.5z" fill="#666" stroke="none"/>
      <!-- notes -->
      <path d="M430 9.5l3-3 3 3M430 13h12M430 15.5h12M430 18h12"/>
      <!-- views -->
      <path d="M561.5 6.5h13v12h-13zM564.5 6.5v12M566.5 9.5h5v5h-5z"/>
      <path d="M601 7h5v4.5h-5zM609 7h5v4.5h-5zM601 14h5v4.5h-5zM609 14h5v4.5h-5z"/>
      <g transform="translate(6.5 0)"><path d="M640.5 7v11M640.5 7h-6.5v11h6.5M640.5 7h6.5v11h-6.5M636 10h3M636 12.5h3M636 15h3M642 10h3M642 12.5h3M642 15h3"/></g>
      <path d="M680 7h13M681 7v7.5h11V7M686.5 14.5v4M684 18.5h5"/>
      <!-- zoom -->
      <path d="M713.5 12.5h6M725.5 12.5h98M828 12.5h7M831.5 9v7"/>
      <path d="M775.5 10v5"/>
      <!-- fit -->
      <path d="M889.5 7.5h10v10h-10z"/>
      <path d="M891.5 9.5l2.5 2.5M897.5 9.5l-2.5 2.5M891.5 15.5l2.5-2.5M897.5 15.5l-2.5-2.5"/>
    </g>
    <path d="M490 6.5h13v8h-7l-4 3.5v-3.5h-2z" fill="#444"/>
    <rect x="751.5" y="7" width="4.5" height="11" fill="#555"/>
  </svg>

</div>

<!-- share overlay bottom-left -->
<div class="a" style="left:0;top:693px;width:20.5px;height:20px;background:#f37b20"></div>
<svg class="a" style="left:0;top:693px" width="21" height="20"><circle cx="10.3" cy="6.8" r="3.3" fill="#fff"/><path d="M3.5 17.5a6.8 5.6 0 0 1 13.6 0z" fill="#fff"/></svg>
<div class="a" style="left:20.5px;top:693px;width:136.5px;height:20px;background:rgba(30,32,34,.88)"></div>
<svg class="a" style="left:20.5px;top:693px" width="30" height="20">
  <rect x="1.5" y="4" width="11" height="8" rx="1" fill="#e8e8e8"/>
  <path d="M4 10l3-3 2 1.5 2-2" stroke="#555" stroke-width="1" fill="none"/>
  <path d="M3.5 14.5h7" stroke="#e8e8e8" stroke-width="1.5"/>
  <rect x="18" y="3" width="5.5" height="10" rx="2.75" fill="#35d04a"/>
  <path d="M16 9.5a4.8 4.8 0 0 0 9.5 0M20.8 14.5v3" stroke="#e0e0e0" stroke-width="1.2" fill="none"/>
</svg>
<div class="t" style="left:47px;top:695.5px;font-size:13.5px;color:#f4f4f4">彭本超的屏幕共享</div>
<!-- member panel -->
<div class="a" style="left:961px;top:0;width:306px;height:713px;background:#fff;overflow:hidden">
  <div class="a" style="left:0;top:0;width:306px;height:1px;background:#e4e4e4"></div>
  <div class="a" style="left:0;top:23.5px;width:306px;height:1px;background:#eef0f2"></div>
  <div class="a" style="left:283.2px;top:1px;width:23px;height:22.5px;background:#e9ebef;border:1px solid #d2d6dc"></div>
</div>
<svg class="a" style="left:961px;top:0" width="306" height="60">
  <circle cx="10.9" cy="9.2" r="2.9" fill="#8a8a8a"/>
  <path d="M5 17.2a5.9 4.8 0 0 1 11.8 0z" fill="#8a8a8a"/>
  <circle cx="257.8" cy="12" r=".9" fill="#333"/><circle cx="262" cy="12" r=".9" fill="#333"/><circle cx="266.4" cy="12" r=".9" fill="#333"/>
  <path d="M271.4 8.5l7 7M278.4 8.5l-7 7" stroke="#222" stroke-width="1.4"/>
  <path d="M290.6 9.2h7M290.6 12h7M290.6 14.8h7" stroke="#8a8e94" stroke-width="1"/>
  <rect x="10.5" y="27.5" width="285" height="24" rx="3" fill="#fff" stroke="#c6ccd8" stroke-width="1"/>
  <circle cx="22" cy="39.3" r="3.6" fill="none" stroke="#6a7282" stroke-width="1.6"/>
  <path d="M24.6 42l2.3 2.3" stroke="#6a7282" stroke-width="1.8"/>
</svg>
<div class="t" style="left:981px;top:7.5px;font-size:10.5px;color:#333">成员(73)</div>
<div class="t" style="left:991px;top:34px;font-size:10px;color:#a0a0a0">搜索成员</div>
<!-- tooltip -->
<div class="a" style="left:1159.5px;top:30px;width:108px;height:29px;background:#2c2f33"></div>
<div class="a" style="left:1189px;top:37px;width:1px;height:15.5px;background:#1b1d20"></div>
<svg class="a" style="left:1165px;top:36px" width="20" height="18">
  <rect x="6.2" y="2.8" width="5.5" height="8.5" rx="2.75" fill="#888"/><path d="M4.5 8a4.5 4.5 0 0 0 9 0M9 12.8v1.6M7 14.4h4" stroke="#777" stroke-width="1" fill="none"/>
  <path d="M3.8 14.5l11.2-11.5" stroke="#e04a3a" stroke-width="1.2"/>
</svg>
<div class="t" style="left:1196.5px;top:38.5px;font-size:10.8px;color:#f2f2f2">正在讲话: 彭本超</div>
<!-- rows -->
<svg class="a" style="left:976.5px;top:71.25px" width="25.5" height="25.5" viewBox="0 0 26 26"><clipPath id="av0"><circle cx="13" cy="13" r="13"/></clipPath><g clip-path="url(#av0)"><rect width="26" height="26" fill="#a3a8a5"/><ellipse cx="11" cy="9.5" rx="6.5" ry="6" fill="#1c1818"/><ellipse cx="12.5" cy="12.5" rx="4" ry="5" fill="#e6cbbd"/><path d="M2 26v-4q4-4 8-4l3 2 3-2q5 0 8 4v4z" fill="#1a1818"/><rect x="15.5" y="12.5" width="4" height="8" rx="1" fill="#9a9ad0"/><circle cx="16.5" cy="13" r="1.8" fill="#e6cbbd"/></g></svg>
<div class="t" style="left:1009.5px;top:71.50px;font-size:10px;color:#333">罗红雪2021级马克思主义学院</div>
<div class="t" style="left:1009.5px;top:86.50px;font-size:10px;color:#888">(我)</div>
<svg class="a" style="left:1218px;top:75.00px" width="38" height="18">
<rect x="5.8" y="2" width="5.5" height="9" rx="2.75" fill="#c8c8c8"/><path d="M4 7.5a4.5 4.5 0 0 0 9 0M8.5 12.5v2M6.3 15h4.4" stroke="#c8c8c8" stroke-width="1" fill="none"/>
<path d="M3.2 14l10.8-10.8" stroke="#f07070" stroke-width="1.1"/>
<rect x="22" y="5.2" width="9.3" height="7" rx="1" fill="#c8c8c8"/><path d="M31.3 8.7l3.5-3.2v6.4z" fill="#c8c8c8"/>
<path d="M22.3 13.5l9-9.3" stroke="#f07070" stroke-width="1.1"/>
</svg>
<svg class="a" style="left:976.5px;top:107.55px" width="25.5" height="25.5" viewBox="0 0 26 26"><clipPath id="av1"><circle cx="13" cy="13" r="13"/></clipPath><g clip-path="url(#av1)"><rect width="26" height="26" fill="#d8402a"/><circle cx="6" cy="20" r="5" fill="#f0a030"/><circle cx="21" cy="7" r="4" fill="#f4c040"/><ellipse cx="13" cy="14" rx="6" ry="6.5" fill="#f4e0d4"/><circle cx="11" cy="13" r="2" fill="#e8b8a8"/><path d="M5 5h7M7 3v5" stroke="#f8e8e0" stroke-width="1.6"/><circle cx="20" cy="20" r="3" fill="#b82010"/></g></svg>
<div class="t" style="left:1009.5px;top:108.30px;font-size:10px;color:#333">彭本超</div>
<div class="t" style="left:1009.5px;top:122.80px;font-size:10px;color:#888">(主持人)</div>
<svg class="a" style="left:1200px;top:111.30px" width="56" height="18">
<rect x="2" y="6" width="10" height="7.5" rx="1" fill="#c8c8c8"/><path d="M4.5 12l2.5-2.5 1.5 1 2-2" stroke="#f4f4f4" stroke-width=".9" fill="none"/><path d="M4 15.5h6" stroke="#c8c8c8" stroke-width="1.2"/>
<rect x="23.5" y="5" width="6" height="9" rx="3" fill="#48e040"/><path d="M21.8 10a4.7 4.7 0 0 0 9.4 0M26.5 14.8v2M24 17h5" stroke="#c8c8c8" stroke-width="1" fill="none"/>
<rect x="40" y="7.5" width="9.5" height="7" rx="1" fill="#c8c8c8"/><path d="M49.5 11l3.3-3v6z" fill="#c8c8c8"/>
</svg>
<svg class="a" style="left:976.5px;top:143.85px" width="25.5" height="25.5" viewBox="0 0 26 26"><clipPath id="av2"><circle cx="13" cy="13" r="13"/></clipPath><g clip-path="url(#av2)"><rect width="26" height="26" fill="#a6c6e4"/><path d="M0 9q6-3 13-1t13 0v4H0z" fill="#e4eaf0"/><path d="M0 14q5-2 9 0l5 1q6-3 12-1v12H0z" fill="#8a9a7c"/><path d="M6 20q6-6 12-3t8 2v7H6z" fill="#3c4a32"/><rect x="6" y="13" width="2" height="6" fill="#e8e0d0"/></g></svg>
<div class="t" style="left:1009.5px;top:151.60px;font-size:10px;color:#333">雨沐</div>
<svg class="a" style="left:1218px;top:147.60px" width="38" height="18">
<rect x="5.8" y="2" width="5.5" height="9" rx="2.75" fill="#c8c8c8"/><path d="M4 7.5a4.5 4.5 0 0 0 9 0M8.5 12.5v2M6.3 15h4.4" stroke="#c8c8c8" stroke-width="1" fill="none"/>

<rect x="22" y="5.2" width="9.3" height="7" rx="1" fill="#c8c8c8"/><path d="M31.3 8.7l3.5-3.2v6.4z" fill="#c8c8c8"/>
<path d="M22.3 13.5l9-9.3" stroke="#f07070" stroke-width="1.1"/>
</svg>
<svg class="a" style="left:976.5px;top:180.15px" width="25.5" height="25.5" viewBox="0 0 26 26"><clipPath id="av3"><circle cx="13" cy="13" r="13"/></clipPath><g clip-path="url(#av3)"><rect width="26" height="26" fill="#f2ecf2"/><path d="M4 15q-1-10 9-11q10 1 9 11l-2 4h-14z" fill="#5e3a5c"/><ellipse cx="13" cy="15" rx="5" ry="5.5" fill="#f6e6ea"/><circle cx="11" cy="15" r="1" fill="#a03050"/><circle cx="15" cy="15" r="1" fill="#a03050"/><path d="M7 5h12l-2-3h-8z" fill="#3a2a3a"/><path d="M8 21h10v5H8z" fill="#e0d0e0"/></g></svg>
<div class="t" style="left:1009.5px;top:187.90px;font-size:10px;color:#333">19-2-14辛易桐</div>
<svg class="a" style="left:1218px;top:183.90px" width="38" height="18">
<rect x="5.8" y="2" width="5.5" height="9" rx="2.75" fill="#c8c8c8"/><path d="M4 7.5a4.5 4.5 0 0 0 9 0M8.5 12.5v2M6.3 15h4.4" stroke="#c8c8c8" stroke-width="1" fill="none"/>
<path d="M3.2 14l10.8-10.8" stroke="#f07070" stroke-width="1.1"/>
<rect x="22" y="5.2" width="9.3" height="7" rx="1" fill="#c8c8c8"/><path d="M31.3 8.7l3.5-3.2v6.4z" fill="#c8c8c8"/>
<path d="M22.3 13.5l9-9.3" stroke="#f07070" stroke-width="1.1"/>
</svg>
<svg class="a" style="left:976.5px;top:216.45px" width="25.5" height="25.5" viewBox="0 0 26 26"><clipPath id="av4"><circle cx="13" cy="13" r="13"/></clipPath><g clip-path="url(#av4)"><rect width="26" height="26" fill="#fff"/><path d="M2 12l4-2-2-4 5 1 1-5 3 4 4-4 1 5 5-2-2 5 4 2-4 2 3 4-5 0 1 5-4-3-3 4-2-4-4 3 1-5-5 0 3-4z" fill="#9a40e2"/><ellipse cx="13" cy="14.5" rx="3.2" ry="6" fill="#f2c020"/><circle cx="13" cy="12.5" r="1.2" fill="#222"/></g></svg>
<div class="t" style="left:1009.5px;top:224.20px;font-size:10px;color:#333">19人力1雷明悦</div>
<svg class="a" style="left:1218px;top:220.20px" width="38" height="18">
<rect x="5.8" y="2" width="5.5" height="9" rx="2.75" fill="#c8c8c8"/><path d="M4 7.5a4.5 4.5 0 0 0 9 0M8.5 12.5v2M6.3 15h4.4" stroke="#c8c8c8" stroke-width="1" fill="none"/>
<path d="M3.2 14l10.8-10.8" stroke="#f07070" stroke-width="1.1"/>
<rect x="22" y="5.2" width="9.3" height="7" rx="1" fill="#c8c8c8"/><path d="M31.3 8.7l3.5-3.2v6.4z" fill="#c8c8c8"/>
<path d="M22.3 13.5l9-9.3" stroke="#f07070" stroke-width="1.1"/>
</svg>
<svg class="a" style="left:976.5px;top:252.75px" width="25.5" height="25.5" viewBox="0 0 26 26"><clipPath id="av5"><circle cx="13" cy="13" r="13"/></clipPath><g clip-path="url(#av5)"><rect width="26" height="26" fill="#c8bab4"/><path d="M3 11q2-8 11-8q9 0 10 7z" fill="#f2c4cc"/><ellipse cx="13" cy="16" rx="9" ry="6.5" fill="#fafafa"/><circle cx="9.5" cy="15" r="1.6" fill="#222"/><circle cx="17" cy="14.5" r="1.8" fill="#222"/><ellipse cx="13" cy="18.5" rx="2" ry="1.3" fill="#333"/></g></svg>
<div class="t" style="left:1009.5px;top:260.50px;font-size:10px;color:#333">19食品三班张艳华</div>
<svg class="a" style="left:1218px;top:256.50px" width="38" height="18">
<rect x="5.8" y="2" width="5.5" height="9" rx="2.75" fill="#c8c8c8"/><path d="M4 7.5a4.5 4.5 0 0 0 9 0M8.5 12.5v2M6.3 15h4.4" stroke="#c8c8c8" stroke-width="1" fill="none"/>
<path d="M3.2 14l10.8-10.8" stroke="#f07070" stroke-width="1.1"/>
<rect x="22" y="5.2" width="9.3" height="7" rx="1" fill="#c8c8c8"/><path d="M31.3 8.7l3.5-3.2v6.4z" fill="#c8c8c8"/>
<path d="M22.3 13.5l9-9.3" stroke="#f07070" stroke-width="1.1"/>
</svg>
<svg class="a" style="left:976.5px;top:289.05px" width="25.5" height="25.5" viewBox="0 0 26 26"><clipPath id="av6"><circle cx="13" cy="13" r="13"/></clipPath><g clip-path="url(#av6)"><rect width="26" height="26" fill="#b88058"/><path d="M0 0h26v9q-8-3-13-1T0 9z" fill="#d8b090"/><ellipse cx="11" cy="13" rx="5" ry="6" fill="#ecc4a8"/><path d="M5 9q6-6 12 0l-2 1q-4-3-8 0z" fill="#5a3020"/><path d="M14 20q6-4 12 0v6H12z" fill="#e89040"/><path d="M2 22q5-2 10 0v4H2z" fill="#90b050"/></g></svg>
<div class="t" style="left:1009.5px;top:296.80px;font-size:10px;color:#333">20人力二班宋文婷</div>
<svg class="a" style="left:1218px;top:292.80px" width="38" height="18">
<rect x="5.8" y="2" width="5.5" height="9" rx="2.75" fill="#c8c8c8"/><path d="M4 7.5a4.5 4.5 0 0 0 9 0M8.5 12.5v2M6.3 15h4.4" stroke="#c8c8c8" stroke-width="1" fill="none"/>
<path d="M3.2 14l10.8-10.8" stroke="#f07070" stroke-width="1.1"/>
<rect x="22" y="5.2" width="9.3" height="7" rx="1" fill="#c8c8c8"/><path d="M31.3 8.7l3.5-3.2v6.4z" fill="#c8c8c8"/>
<path d="M22.3 13.5l9-9.3" stroke="#f07070" stroke-width="1.1"/>
</svg>
<svg class="a" style="left:976.5px;top:325.35px" width="25.5" height="25.5" viewBox="0 0 26 26"><clipPath id="av7"><circle cx="13" cy="13" r="13"/></clipPath><g clip-path="url(#av7)"><rect width="26" height="26" fill="#f2eee2"/><path d="M14 6q8 2 9 10l-1 10h-9z" fill="#d89a90"/><path d="M16 14l5 4M16 19l5 3" stroke="#8a4040" stroke-width="1"/><path d="M3 10q3 4 2 9" stroke="#90c0a0" stroke-width="1.6" fill="none"/><circle cx="17" cy="7" r="3" fill="#e8c0b8"/></g></svg>
<div class="t" style="left:1009.5px;top:333.10px;font-size:10px;color:#333">21视传二班陈佳</div>
<svg class="a" style="left:1218px;top:329.10px" width="38" height="18">
<rect x="5.8" y="2" width="5.5" height="9" rx="2.75" fill="#c8c8c8"/><path d="M4 7.5a4.5 4.5 0 0 0 9 0M8.5 12.5v2M6.3 15h4.4" stroke="#c8c8c8" stroke-width="1" fill="none"/>
<path d="M3.2 14l10.8-10.8" stroke="#f07070" stroke-width="1.1"/>
<rect x="22" y="5.2" width="9.3" height="7" rx="1" fill="#c8c8c8"/><path d="M31.3 8.7l3.5-3.2v6.4z" fill="#c8c8c8"/>
<path d="M22.3 13.5l9-9.3" stroke="#f07070" stroke-width="1.1"/>
</svg>
<svg class="a" style="left:976.5px;top:361.65px" width="25.5" height="25.5" viewBox="0 0 26 26"><clipPath id="av8"><circle cx="13" cy="13" r="13"/></clipPath><g clip-path="url(#av8)"><rect width="26" height="26" fill="#2e2422"/><path d="M5 26q0-14 6-17q8-3 11 6l1 11z" fill="#1a1414"/><ellipse cx="13" cy="12" rx="4.2" ry="5.2" fill="#e8ccbc"/><path d="M9 18q4 2 8 0l2 3-8 1z" fill="#f0e0d8"/><path d="M11 15h3" stroke="#b04040" stroke-width="1"/></g></svg>
<div class="t" style="left:1009.5px;top:369.40px;font-size:10px;color:#333">船舶20-2高靖萱</div>
<svg class="a" style="left:1218px;top:365.40px" width="38" height="18">
<rect x="5.8" y="2" width="5.5" height="9" rx="2.75" fill="#c8c8c8"/><path d="M4 7.5a4.5 4.5 0 0 0 9 0M8.5 12.5v2M6.3 15h4.4" stroke="#c8c8c8" stroke-width="1" fill="none"/>
<path d="M3.2 14l10.8-10.8" stroke="#f07070" stroke-width="1.1"/>
<rect x="22" y="5.2" width="9.3" height="7" rx="1" fill="#c8c8c8"/><path d="M31.3 8.7l3.5-3.2v6.4z" fill="#c8c8c8"/>
<path d="M22.3 13.5l9-9.3" stroke="#f07070" stroke-width="1.1"/>
</svg>
<svg class="a" style="left:976.5px;top:397.95px" width="25.5" height="25.5" viewBox="0 0 26 26"><clipPath id="av9"><circle cx="13" cy="13" r="13"/></clipPath><g clip-path="url(#av9)"><rect width="26" height="26" fill="#d6d6d0"/><path d="M7 10q1-7 7-7t6 7v4H7z" fill="#3a302a"/><ellipse cx="13.5" cy="11" rx="4" ry="5" fill="#ead6c6"/><path d="M4 26q1-8 9-9q9 1 10 9z" fill="#b8d4dc"/></g></svg>
<div class="t" style="left:1009.5px;top:405.70px;font-size:10px;color:#333">船舶20-3-25郭文文</div>
<svg class="a" style="left:1218px;top:401.70px" width="38" height="18">
<rect x="5.8" y="2" width="5.5" height="9" rx="2.75" fill="#c8c8c8"/><path d="M4 7.5a4.5 4.5 0 0 0 9 0M8.5 12.5v2M6.3 15h4.4" stroke="#c8c8c8" stroke-width="1" fill="none"/>
<path d="M3.2 14l10.8-10.8" stroke="#f07070" stroke-width="1.1"/>
<rect x="22" y="5.2" width="9.3" height="7" rx="1" fill="#c8c8c8"/><path d="M31.3 8.7l3.5-3.2v6.4z" fill="#c8c8c8"/>
<path d="M22.3 13.5l9-9.3" stroke="#f07070" stroke-width="1.1"/>
</svg>
<svg class="a" style="left:976.5px;top:434.25px" width="25.5" height="25.5" viewBox="0 0 26 26"><clipPath id="av10"><circle cx="13" cy="13" r="13"/></clipPath><g clip-path="url(#av10)"><rect width="26" height="26" fill="#98c46a"/><path d="M0 18q8-4 26 0v8H0z" fill="#78a850"/><ellipse cx="9" cy="11" rx="4.5" ry="4" fill="#f4dcc0"/><path d="M5 8q4-4 9-1l-1 2q-3-2-7 0z" fill="#222"/><rect x="7" y="14" width="9" height="6" fill="#e03a2a"/><path d="M16 5h6v7h-6z" fill="#fff" stroke="#888" stroke-width=".5"/></g></svg>
<div class="t" style="left:1009.5px;top:442.00px;font-size:10px;color:#333">动画20-1马思嘉</div>
<svg class="a" style="left:1218px;top:438.00px" width="38" height="18">
<rect x="5.8" y="2" width="5.5" height="9" rx="2.75" fill="#c8c8c8"/><path d="M4 7.5a4.5 4.5 0 0 0 9 0M8.5 12.5v2M6.3 15h4.4" stroke="#c8c8c8" stroke-width="1" fill="none"/>
<path d="M3.2 14l10.8-10.8" stroke="#f07070" stroke-width="1.1"/>
<rect x="22" y="5.2" width="9.3" height="7" rx="1" fill="#c8c8c8"/><path d="M31.3 8.7l3.5-3.2v6.4z" fill="#c8c8c8"/>
<path d="M22.3 13.5l9-9.3" stroke="#f07070" stroke-width="1.1"/>
</svg>
<svg class="a" style="left:976.5px;top:470.55px" width="25.5" height="25.5" viewBox="0 0 26 26"><clipPath id="av11"><circle cx="13" cy="13" r="13"/></clipPath><g clip-path="url(#av11)"><rect width="26" height="26" fill="#8898b0"/><path d="M2 26q-2-18 11-19q13 1 11 19z" fill="#a06a44"/><circle cx="7" cy="8" r="3" fill="#a06a44"/><circle cx="19" cy="8" r="3" fill="#a06a44"/><ellipse cx="13" cy="15" rx="4" ry="3" fill="#d8a880"/><circle cx="13" cy="14" r="1.2" fill="#222"/><path d="M14 18q3 2 2 6" stroke="#2a1a10" stroke-width="2" fill="none"/></g></svg>
<div class="t" style="left:1009.5px;top:478.30px;font-size:10px;color:#333">法学1班05号梁誉森</div>
<svg class="a" style="left:1218px;top:474.30px" width="38" height="18">
<rect x="5.8" y="2" width="5.5" height="9" rx="2.75" fill="#c8c8c8"/><path d="M4 7.5a4.5 4.5 0 0 0 9 0M8.5 12.5v2M6.3 15h4.4" stroke="#c8c8c8" stroke-width="1" fill="none"/>
<path d="M3.2 14l10.8-10.8" stroke="#f07070" stroke-width="1.1"/>
<rect x="22" y="5.2" width="9.3" height="7" rx="1" fill="#c8c8c8"/><path d="M31.3 8.7l3.5-3.2v6.4z" fill="#c8c8c8"/>
<path d="M22.3 13.5l9-9.3" stroke="#f07070" stroke-width="1.1"/>
</svg>
<svg class="a" style="left:976.5px;top:506.85px" width="25.5" height="25.5" viewBox="0 0 26 26"><clipPath id="av12"><circle cx="13" cy="13" r="13"/></clipPath><g clip-path="url(#av12)"><rect width="26" height="26" fill="#2a2624"/><ellipse cx="13" cy="11.5" rx="4.5" ry="5.5" fill="#8a6a5a"/><path d="M8.5 8q4-5 9 0v-2q-4-4-9 0z" fill="#111"/><path d="M10 17q4 4 6 9h-8z" fill="#b08878"/></g></svg>
<div class="t" style="left:1009.5px;top:514.60px;font-size:10px;color:#333">港工20-1罗仕林2人</div>
<svg class="a" style="left:1218px;top:510.60px" width="38" height="18">
<rect x="5.8" y="2" width="5.5" height="9" rx="2.75" fill="#c8c8c8"/><path d="M4 7.5a4.5 4.5 0 0 0 9 0M8.5 12.5v2M6.3 15h4.4" stroke="#c8c8c8" stroke-width="1" fill="none"/>
<path d="M3.2 14l10.8-10.8" stroke="#f07070" stroke-width="1.1"/>
<rect x="22" y="5.2" width="9.3" height="7" rx="1" fill="#c8c8c8"/><path d="M31.3 8.7l3.5-3.2v6.4z" fill="#c8c8c8"/>
<path d="M22.3 13.5l9-9.3" stroke="#f07070" stroke-width="1.1"/>
</svg>
<svg class="a" style="left:976.5px;top:543.15px" width="25.5" height="25.5" viewBox="0 0 26 26"><clipPath id="av13"><circle cx="13" cy="13" r="13"/></clipPath><g clip-path="url(#av13)"><rect width="26" height="26" fill="#fff"/><circle cx="13" cy="13" r="8" fill="#f6bcd8"/><rect x="9" y="13" width="8" height="4" rx="1" fill="#fff" stroke="#e070a8" stroke-width=".8"/><circle cx="9" cy="9.5" r=".8" fill="#e070a8"/><circle cx="16.5" cy="9.5" r=".8" fill="#e070a8"/></g></svg>
<div class="t" style="left:1009.5px;top:550.90px;font-size:10px;color:#333">港工二班莫文靖</div>
<svg class="a" style="left:1218px;top:546.90px" width="38" height="18">
<rect x="5.8" y="2" width="5.5" height="9" rx="2.75" fill="#c8c8c8"/><path d="M4 7.5a4.5 4.5 0 0 0 9 0M8.5 12.5v2M6.3 15h4.4" stroke="#c8c8c8" stroke-width="1" fill="none"/>
<path d="M3.2 14l10.8-10.8" stroke="#f07070" stroke-width="1.1"/>
<rect x="22" y="5.2" width="9.3" height="7" rx="1" fill="#c8c8c8"/><path d="M31.3 8.7l3.5-3.2v6.4z" fill="#c8c8c8"/>
<path d="M22.3 13.5l9-9.3" stroke="#f07070" stroke-width="1.1"/>
</svg>
<svg class="a" style="left:976.5px;top:579.45px" width="25.5" height="25.5" viewBox="0 0 26 26"><clipPath id="av14"><circle cx="13" cy="13" r="13"/></clipPath><g clip-path="url(#av14)"><rect width="26" height="26" fill="#e6c090"/><path d="M0 0h13v12H0z" fill="#a8c0d8"/><path d="M0 11h13v3H0z" fill="#f8e0b0"/><path d="M12 0h14v26H10q-2-8 0-14q4-8 2-12z" fill="#6a4630"/><path d="M0 18h12v8H0z" fill="#9a6840"/></g></svg>
<div class="t" style="left:1009.5px;top:587.20px;font-size:10px;color:#333">给排19-2郝宇婷</div>
<svg class="a" style="left:1218px;top:583.20px" width="38" height="18">
<rect x="5.8" y="2" width="5.5" height="9" rx="2.75" fill="#c8c8c8"/><path d="M4 7.5a4.5 4.5 0 0 0 9 0M8.5 12.5v2M6.3 15h4.4" stroke="#c8c8c8" stroke-width="1" fill="none"/>
<path d="M3.2 14l10.8-10.8" stroke="#f07070" stroke-width="1.1"/>
<rect x="22" y="5.2" width="9.3" height="7" rx="1" fill="#c8c8c8"/><path d="M31.3 8.7l3.5-3.2v6.4z" fill="#c8c8c8"/>
<path d="M22.3 13.5l9-9.3" stroke="#f07070" stroke-width="1.1"/>
</svg>
<svg class="a" style="left:976.5px;top:615.75px" width="25.5" height="25.5" viewBox="0 0 26 26"><clipPath id="av15"><circle cx="13" cy="13" r="13"/></clipPath><g clip-path="url(#av15)"><rect width="26" height="26" fill="#9a9a9a"/><path d="M4 18v-7q0-8 9-8t9 8v7z" fill="#d0d0d0"/><path d="M7 18v-6q0-6 6-6t6 6v6z" fill="#f0f0f0"/><circle cx="10.5" cy="12" r="1.6" fill="#333"/><circle cx="15.5" cy="12" r="1.6" fill="#333"/><path d="M0 19h26v7H0z" fill="#4a4a4a"/><path d="M3 18h20v2H3z" fill="#777"/></g></svg>
<div class="t" style="left:1009.5px;top:623.50px;font-size:10px;color:#333">给排二牛骥元</div>
<svg class="a" style="left:1218px;top:619.50px" width="38" height="18">
<rect x="5.8" y="2" width="5.5" height="9" rx="2.75" fill="#c8c8c8"/><path d="M4 7.5a4.5 4.5 0 0 0 9 0M8.5 12.5v2M6.3 15h4.4" stroke="#c8c8c8" stroke-width="1" fill="none"/>
<path d="M3.2 14l10.8-10.8" stroke="#f07070" stroke-width="1.1"/>
<rect x="22" y="5.2" width="9.3" height="7" rx="1" fill="#c8c8c8"/><path d="M31.3 8.7l3.5-3.2v6.4z" fill="#c8c8c8"/>
<path d="M22.3 13.5l9-9.3" stroke="#f07070" stroke-width="1.1"/>
</svg>
<svg class="a" style="left:976.5px;top:652.05px" width="25.5" height="25.5" viewBox="0 0 26 26"><clipPath id="av16"><circle cx="13" cy="13" r="13"/></clipPath><g clip-path="url(#av16)"><rect width="26" height="26" fill="#9a9a90"/><path d="M0 10h26v4H0z" fill="#c84030"/><path d="M4 26q4-14 9-14q5 0 9 14z" fill="#d8c0a0"/><path d="M2 3h22v5H2z" fill="#6a7070"/></g></svg>
<div class="t" style="left:1009.5px;top:659.80px;font-size:10px;color:#333">海航20-2王娇</div>
<svg class="a" style="left:1218px;top:655.80px" width="38" height="18">
<rect x="5.8" y="2" width="5.5" height="9" rx="2.75" fill="#c8c8c8"/><path d="M4 7.5a4.5 4.5 0 0 0 9 0M8.5 12.5v2M6.3 15h4.4" stroke="#c8c8c8" stroke-width="1" fill="none"/>
<path d="M3.2 14l10.8-10.8" stroke="#f07070" stroke-width="1.1"/>
<rect x="22" y="5.2" width="9.3" height="7" rx="1" fill="#c8c8c8"/><path d="M31.3 8.7l3.5-3.2v6.4z" fill="#c8c8c8"/>
<path d="M22.3 13.5l9-9.3" stroke="#f07070" stroke-width="1.1"/>
</svg>
<div class="a" style="left:961px;top:663px;width:306px;height:50px;background:#fff;border-top:1px solid #eceef0"></div>
<div class="a" style="left:1081px;top:679.7px;width:79px;height:16.3px;background:#0c6ff2;border-radius:1px"></div>
<div class="t" style="left:1100.5px;top:683px;font-size:10px;color:#fff">解除静音</div>

</body></html>
